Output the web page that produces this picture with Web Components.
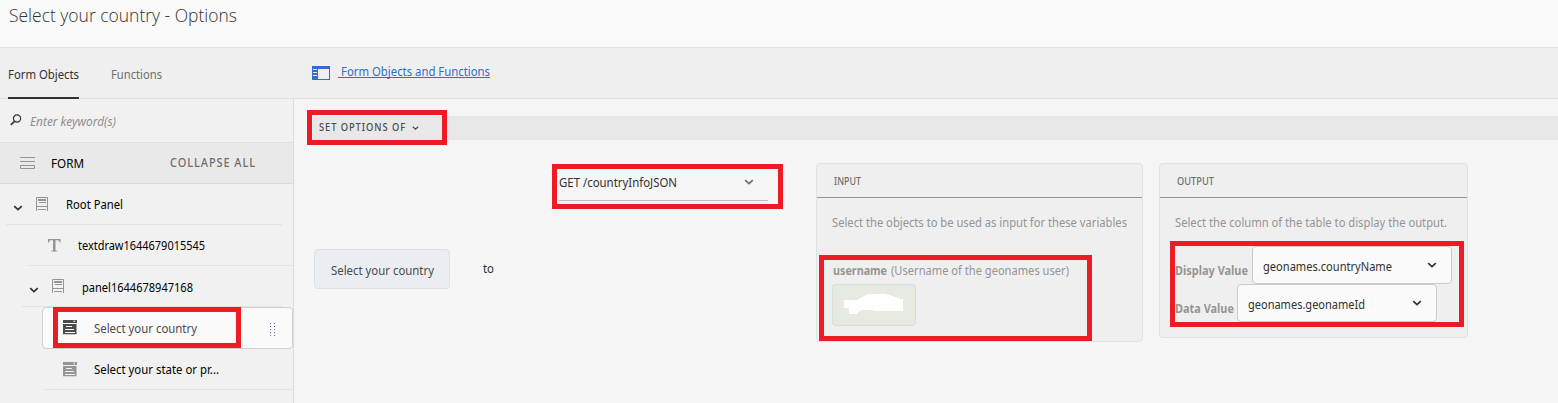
<!DOCTYPE html>
<html lang="en"><head><meta charset="utf-8"><title>Select your country - Options</title>
<style>html,body{margin:0;height:403px;overflow:hidden;background:#f5f5f5;font-family:"Noto Sans","Open Sans",sans-serif}</style></head>
<body><rule-editor></rule-editor>
<script>
const define=(name,html,setup)=>{
  const t=document.createElement('template');t.innerHTML=html;
  customElements.define(name,class extends HTMLElement{
    constructor(){super();this.attachShadow({mode:'open'}).append(t.content.cloneNode(true));}
    connectedCallback(){if(setup)setup(this,this.shadowRoot);}
  });
};

/* One line of text condensed to the width "w" */
define('ui-text',`<style>
:host{display:block;flex:none;height:18px;line-height:18px;font-size:13px;white-space:pre}
span{display:inline-block;transform-origin:0 50%}
</style><span><slot></slot></span>`,(el,r)=>{
  const w=+el.getAttribute('w'),s=r.querySelector('span');
  el.style.width=w+'px';
  const n=s.getBoundingClientRect().width;
  if(n)s.style.transform='scaleX('+w/n+')';
});

const ICONS={
  chevron:[10,6,'<path d="M1.2 1.2 5 4.6 8.8 1.2" fill="none" stroke="currentColor" stroke-width="1.7"/>'],
  search:[12,12,'<circle cx="7" cy="4.5" r="3.6" fill="none" stroke="currentColor" stroke-width="1.2"/><path d="M4.5 7.3.8 10.8" stroke="currentColor" stroke-width="1.7"/>'],
  form:[16,14,'<path d="M0 .5h15M0 4.500h15M.5 8.500h14v3H.5z" fill="none" stroke="currentColor"/>'],
  panel:[14,14,'<path d="M1.500 14V.5h11V14M1.500 9.500h11M3 12.500h8" fill="none" stroke="currentColor"/><path d="M3 2h8v2H3zM4 5h7v1H4z" fill="currentColor"/>'],
  text:[13,13,'<path d="M0 0h12.500v3.500h-1c-.2-1.700-.8-2.200-2.200-2.200H7.500v9.200c0 .9.400 1.200 1.900 1.300v.8H3.100v-.8c1.500-.1 1.900-.4 1.900-1.300V1.300H3.200C1.800 1.300 1.200 1.800 1 3.500H0z" fill="currentColor"/>'],
  dropdown:[14,15,'<path fill="currentColor" fill-rule="evenodd" d="M0 0h14v3H0zM10 .8l1.300 1.400L12.600.8zM0 4h13.500v10.200H0zM3 6v1h6V6zM2 9v1h9V9zM2 12v1h10v-1z"/>'],
  rail:[18,14,'<path fill="currentColor" fill-rule="evenodd" d="M0 0h18v14H0zM6 3v10h11V3zM1 3v1h4V3zM1 6v1h4V6zM1 9v1h4V9z"/>'],
  grip:[5,14,'<path d="M.5 0v14M4.500 0v14" stroke="currentColor" stroke-dasharray="1 2"/>']
};
define('ui-icon',`<style>:host{display:block;flex:none}svg{display:block;overflow:visible}</style><svg></svg>`,(el,r)=>{
  const [w,h,p]=ICONS[el.getAttribute('name')],s=r.querySelector('svg');
  s.setAttribute('viewBox','0 0 '+w+' '+h);
  s.setAttribute('width',el.getAttribute('width')||w);s.setAttribute('height',h);s.innerHTML=p;
});

/* Red highlight drawn over the controls it calls out */
define('call-out',`<style>:host{display:block;position:absolute;box-sizing:border-box;border:5px solid #ed1c24;z-index:5;pointer-events:none}</style>`);

define('page-header',`<style>:host{display:block;height:47px;background:#fafafa;border-bottom:1px solid #e2e2e2}
ui-text{font-family:"Open Sans","Noto Sans",sans-serif;font-size:17.5px;font-weight:300;color:#323232;padding:6px 0 0 9px}</style>
<ui-text w="228">Select your country - Options</ui-text>`);

define('page-tabs',`<style>:host{display:flex;box-sizing:border-box;height:51px;background:#efefef;border-bottom:1px solid #e0e0e0;color:#6e6e6e}
.tab{box-sizing:border-box;height:51px;padding-top:17px;margin-left:8px}
.on{color:#323232;border-bottom:2px solid #323232}.tab+.tab{margin-left:32px;width:52px}
ui-icon{margin:18px 8px 0 149px;color:#326ec8}a{display:block;height:15px;margin-top:14px;color:#326ec8;border-bottom:1px solid #326ec8;padding-left:3px}</style>
<div class="tab on"><ui-text w="71">Form Objects</ui-text></div><div class="tab"><ui-text w="51">Functions</ui-text></div>
<ui-icon name="rail"></ui-icon><a><ui-text w="149">Form Objects and Functions</ui-text></a>`);

define('tree-row',`<style>:host{display:flex;box-sizing:border-box;height:41px;border-bottom:1px solid #e3e3e3;color:#000}
:host([selected]){background:#fafafa;border:1px solid #d0d0d0;border-radius:4px;height:42px;color:#4b4b4b}</style><slot></slot>`);

define('object-tree',`<style>:host{display:block;position:relative;box-sizing:border-box;width:294px;background:#f1f1f1;border-right:1px solid #dcdcdc;height:304px}
.search{display:flex;height:43px;border-bottom:1px solid #e0e0e0;color:#323232}
.search ui-text{font-style:italic;color:#8e8e8e;margin:13px 0 0 8px}.search ui-icon{margin:15px 0 0 10px}
.form{display:flex;height:40px;background:#e9e9e9;border-bottom:1px solid #dcdcdc}
.form ui-icon{color:#959595;margin:14px 0 0 20px}
ui-icon{color:#959595}.c{color:#323232}</style>
<div class="search"><ui-icon name="search" style="color:#323232"></ui-icon><ui-text w="86">Enter keyword(s)</ui-text></div>
<div class="form"><ui-icon name="form"></ui-icon><ui-text w="33" style="margin:11px 0 0 15px">FORM</ui-text><ui-text w="86" style="margin:11px 0 0 86px;color:#6e6e6e;font-size:12px;font-weight:500;letter-spacing:1px">COLLAPSE ALL</ui-text></div>
<tree-row style="margin:0 11px 0 6px"><ui-icon class="c" name="chevron" style="margin:21px 0 0 7px"></ui-icon><ui-icon name="panel" style="margin:13px 0 0 12px"></ui-icon><ui-text w="57" style="margin:11px 0 0 17px">Root Panel</ui-text></tree-row>
<tree-row style="margin-left:27px"><ui-icon name="text" style="margin:14px 0 0 21px"></ui-icon><ui-text w="127" style="margin:11px 0 0 17px">textdraw1644679015545</ui-text></tree-row>
<tree-row style="margin:0 11px 0 22px"><ui-icon class="c" name="chevron" style="margin:21px 0 0 7px"></ui-icon><ui-icon name="panel" style="margin:13px 0 0 12px"></ui-icon><ui-text w="111" style="margin:12px 0 0 17px">panel1644678947168</ui-text></tree-row>
<tree-row selected style="margin-left:42px"><ui-icon name="dropdown" style="color:#4b4b4b;margin:12px 0 0 20px"></ui-icon><ui-text w="103" style="margin:11px 0 0 17px">Select your country</ui-text><ui-icon name="grip" style="color:#806090;margin:15px 0 0 73px"></ui-icon></tree-row>
<tree-row style="margin-left:43px"><ui-icon name="dropdown" style="margin:13px 0 0 20px"></ui-icon><ui-text w="125" style="margin:11px 0 0 17px">Select your state or pr...</ui-text></tree-row>
<call-out style="left:53px;top:208px;width:188px;height:41px"></call-out>`);

define('io-card',`<style>:host{display:block;flex:none;position:relative;box-sizing:border-box;border:1px solid #e2e2e2;border-radius:4px;background:#efefef;color:#959595}
.h{height:33px;border-bottom:1px solid #959595;color:#6e6e6e;padding:0 0 0 17px}.h ::slotted(*){font-size:10px!important;font-weight:500}</style>
<div class="h"><slot name="title"></slot></div><slot></slot>`);

define('select-box',`<style>:host{display:flex;box-sizing:border-box;width:200px;height:38px;border:1px solid #cacaca;border-radius:4px;background:#fafafa;color:#323232;padding:10px 14px 0 10px;justify-content:space-between}
ui-icon{margin-top:5px}</style><slot></slot><ui-icon name="chevron"></ui-icon>`);

define('rule-canvas',`<style>:host{display:block;flex:1;position:relative;background:#f5f5f5;height:304px}
.bar{display:flex;height:24px;margin:17px 0 0 19px;background:#e8e8e8;color:#4b4b4b}
.bar ui-text{font-size:10px;font-weight:500;letter-spacing:1px;margin:2px 0 0 6px}.bar ui-icon{margin:9px 0 0 6px}
.row{display:flex;align-items:flex-start;margin-left:20px;padding-top:23px}
.obj{box-sizing:border-box;width:136px;height:40px;margin-top:86px;padding:11px 16px;background:#eaeef3;border:1px solid #dce1e5;border-radius:4px;color:#4b4b4b}
.dd{display:flex;width:209px;height:37px;margin-left:65px;border-bottom:1px solid #bdbdbd;color:#323232}
.dd ui-icon{color:#6e6e6e;margin:16px 0 0 67px}
.pair{display:flex}.user{box-sizing:border-box;width:84px;height:42px;margin:5px 0 0 15px;background:#e5ebe0;border:1px solid #d8dfd4;border-radius:4px;padding:9px 0 0 11px}
svg{display:block}</style>
<div class="bar"><ui-text w="87">SET OPTIONS OF</ui-text><ui-icon name="chevron" width="7"></ui-icon></div>
<div class="row"><div class="obj"><ui-text w="103">Select your country</ui-text></div>
<ui-text w="11" style="color:#323232;margin:96px 0 0 33px">to</ui-text>
<div class="dd"><ui-text w="118" style="margin-top:10px">GET /countryInfoJSON</ui-text><ui-icon name="chevron"></ui-icon></div>
<io-card style="width:327px;height:179px;margin-left:48px"><ui-text slot="title" w="27" style="padding-top:8px">INPUT</ui-text>
<ui-text w="295" style="margin:15px 0 0 15px">Select the objects to be used as input for these variables</ui-text>
<div class="pair" style="margin:30px 0 0 16px"><ui-text w="54" style="font-weight:700">username</ui-text><ui-text w="178" style="margin-left:4px">(Username of the geonames user)</ui-text></div>
<div class="user"><svg width="60" height="20" viewBox="0 0 60 20"><path fill="#fff" d="M0 6h14V5h1V4h2V3h2V2h2V1h2V0h20v1h4v1h3v1h3v1h2v1h4v12H29v-1h-9v-1l-1 1h-2v1h-2v1h-1v2H5v-6H0z"/></svg></div></io-card>
<io-card style="width:309px;height:175px;margin-left:16px"><ui-text slot="title" w="37" style="padding-top:8px">OUTPUT</ui-text>
<ui-text w="272" style="margin:15px 0 0 15px">Select the column of the table to display the output.</ui-text>
<div class="pair" style="margin:15px 0 0 15px"><ui-text w="73" style="font-weight:700;margin-top:15px">Display Value</ui-text><select-box style="margin-left:4px"><ui-text w="129">geonames.countryName</ui-text></select-box></div>
<div class="pair" style="margin-left:15px"><ui-text w="59" style="font-weight:700;margin-top:15px">Data Value</ui-text><select-box style="margin-left:3px"><ui-text w="117">geonames.geonameId</ui-text></select-box></div></io-card></div>
<call-out style="left:13px;top:11px;width:140px;height:35px"></call-out>
<call-out style="left:258px;top:65px;width:231px;height:45px"></call-out>
<call-out style="left:525px;top:156px;width:273px;height:86px"></call-out>
<call-out style="left:876px;top:142px;width:294px;height:86px"></call-out>`);

define('rule-editor',`<style>:host{display:block;height:403px;overflow:hidden}.body{display:flex}</style>
<page-header></page-header><page-tabs></page-tabs><div class="body"><object-tree></object-tree><rule-canvas></rule-canvas></div>`);
</script></body></html>
